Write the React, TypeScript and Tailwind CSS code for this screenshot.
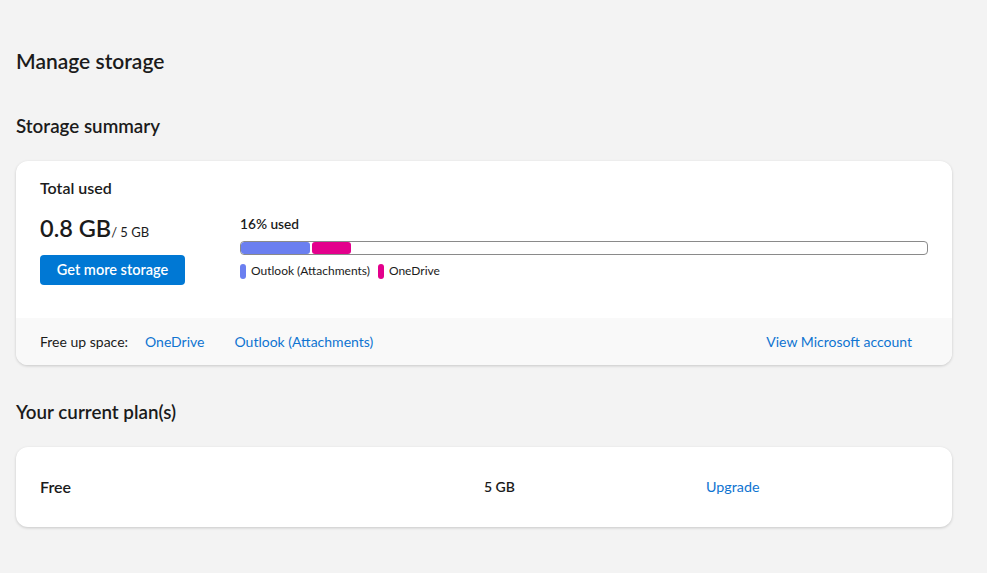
const segments = [
  { label: "Outlook (Attachments)", color: "bg-[#6b7ff0]", width: "w-[69px]" },
  { label: "OneDrive", color: "bg-[#e3008c]", width: "w-[39px]" },
];

const App = () => {
  return (
    <div className="min-h-[573px] w-full bg-[#f3f3f3] px-4 pt-[47px] text-[#1b1b1b] font-['Segoe_UI','Lato',sans-serif]">
      <h1 className="text-[21px] font-semibold leading-[28px]">Manage storage</h1>

      <h2 className="mt-[39px] text-[18.8px] font-semibold leading-[24px]">Storage summary</h2>

      <div className="mt-[23px] w-[936px] overflow-hidden rounded-xl bg-white shadow-[0_1px_3px_rgba(0,0,0,0.18)]">
        <div className="px-6 pt-[18px] pb-[33px]">
          <div className="text-[16px] font-semibold leading-[18px]">Total used</div>
          <div className="mt-[17px] flex">
            <div className="w-[200px]">
              <div className="flex items-baseline">
                <span className="text-[23.5px] font-semibold leading-[28px]">0.8 GB</span>
                <span className="text-[13px] leading-[16px]">/ 5 GB</span>
              </div>
              <button className="mt-[13px] h-[30px] w-[145px] rounded-[4px] bg-[#0078d4] text-[14.5px] font-semibold text-white">
                Get more storage
              </button>
            </div>
            <div className="flex-1 pt-[2px]">
              <div className="text-[13.7px] font-semibold leading-[16px]">16% used</div>
              <div className="mt-[9px] flex h-[14px] w-[688px] overflow-hidden rounded-[4px] border border-[#8a8a8a]">
                {segments.map((s, i) => (
                  <div
                    key={s.label}
                    className={`${s.color} ${s.width} h-full rounded-[3px] ${i > 0 ? "ml-[2px]" : ""}`}
                  />
                ))}
              </div>
              <div className="mt-[8px] flex items-center gap-2">
                {segments.map((s) => (
                  <div key={s.label} className="flex items-center gap-[5px] text-[12px] leading-[16px]">
                    <span className={`${s.color} inline-block h-[15px] w-[6px] rounded-full`} />
                    {s.label}
                  </div>
                ))}
              </div>
            </div>
          </div>
        </div>
        <div className="flex h-[47px] items-center bg-[#f9f9f9] px-6 text-[14px]">
          <span>Free up space:</span>
          <a className="ml-[17px] text-[#0f74d1]">OneDrive</a>
          <a className="ml-[30px] text-[#0f74d1]">Outlook (Attachments)</a>
          <a className="ml-auto mr-4 text-[#0f74d1]">View Microsoft account</a>
        </div>
      </div>

      <h2 className="mt-[35px] text-[18.8px] font-semibold leading-[24px]">Your current plan(s)</h2>

      <div className="mt-[23px] flex h-[80px] w-[936px] items-center rounded-xl bg-white px-6 leading-[20px] shadow-[0_1px_3px_rgba(0,0,0,0.18)]">
        <span className="w-[444px] text-[16px] font-semibold">Free</span>
        <span className="w-[222px] text-[14px] font-semibold">5 GB</span>
        <a className="text-[14.3px] text-[#0f74d1]">Upgrade</a>
      </div>
    </div>
  );
};

export default App;
